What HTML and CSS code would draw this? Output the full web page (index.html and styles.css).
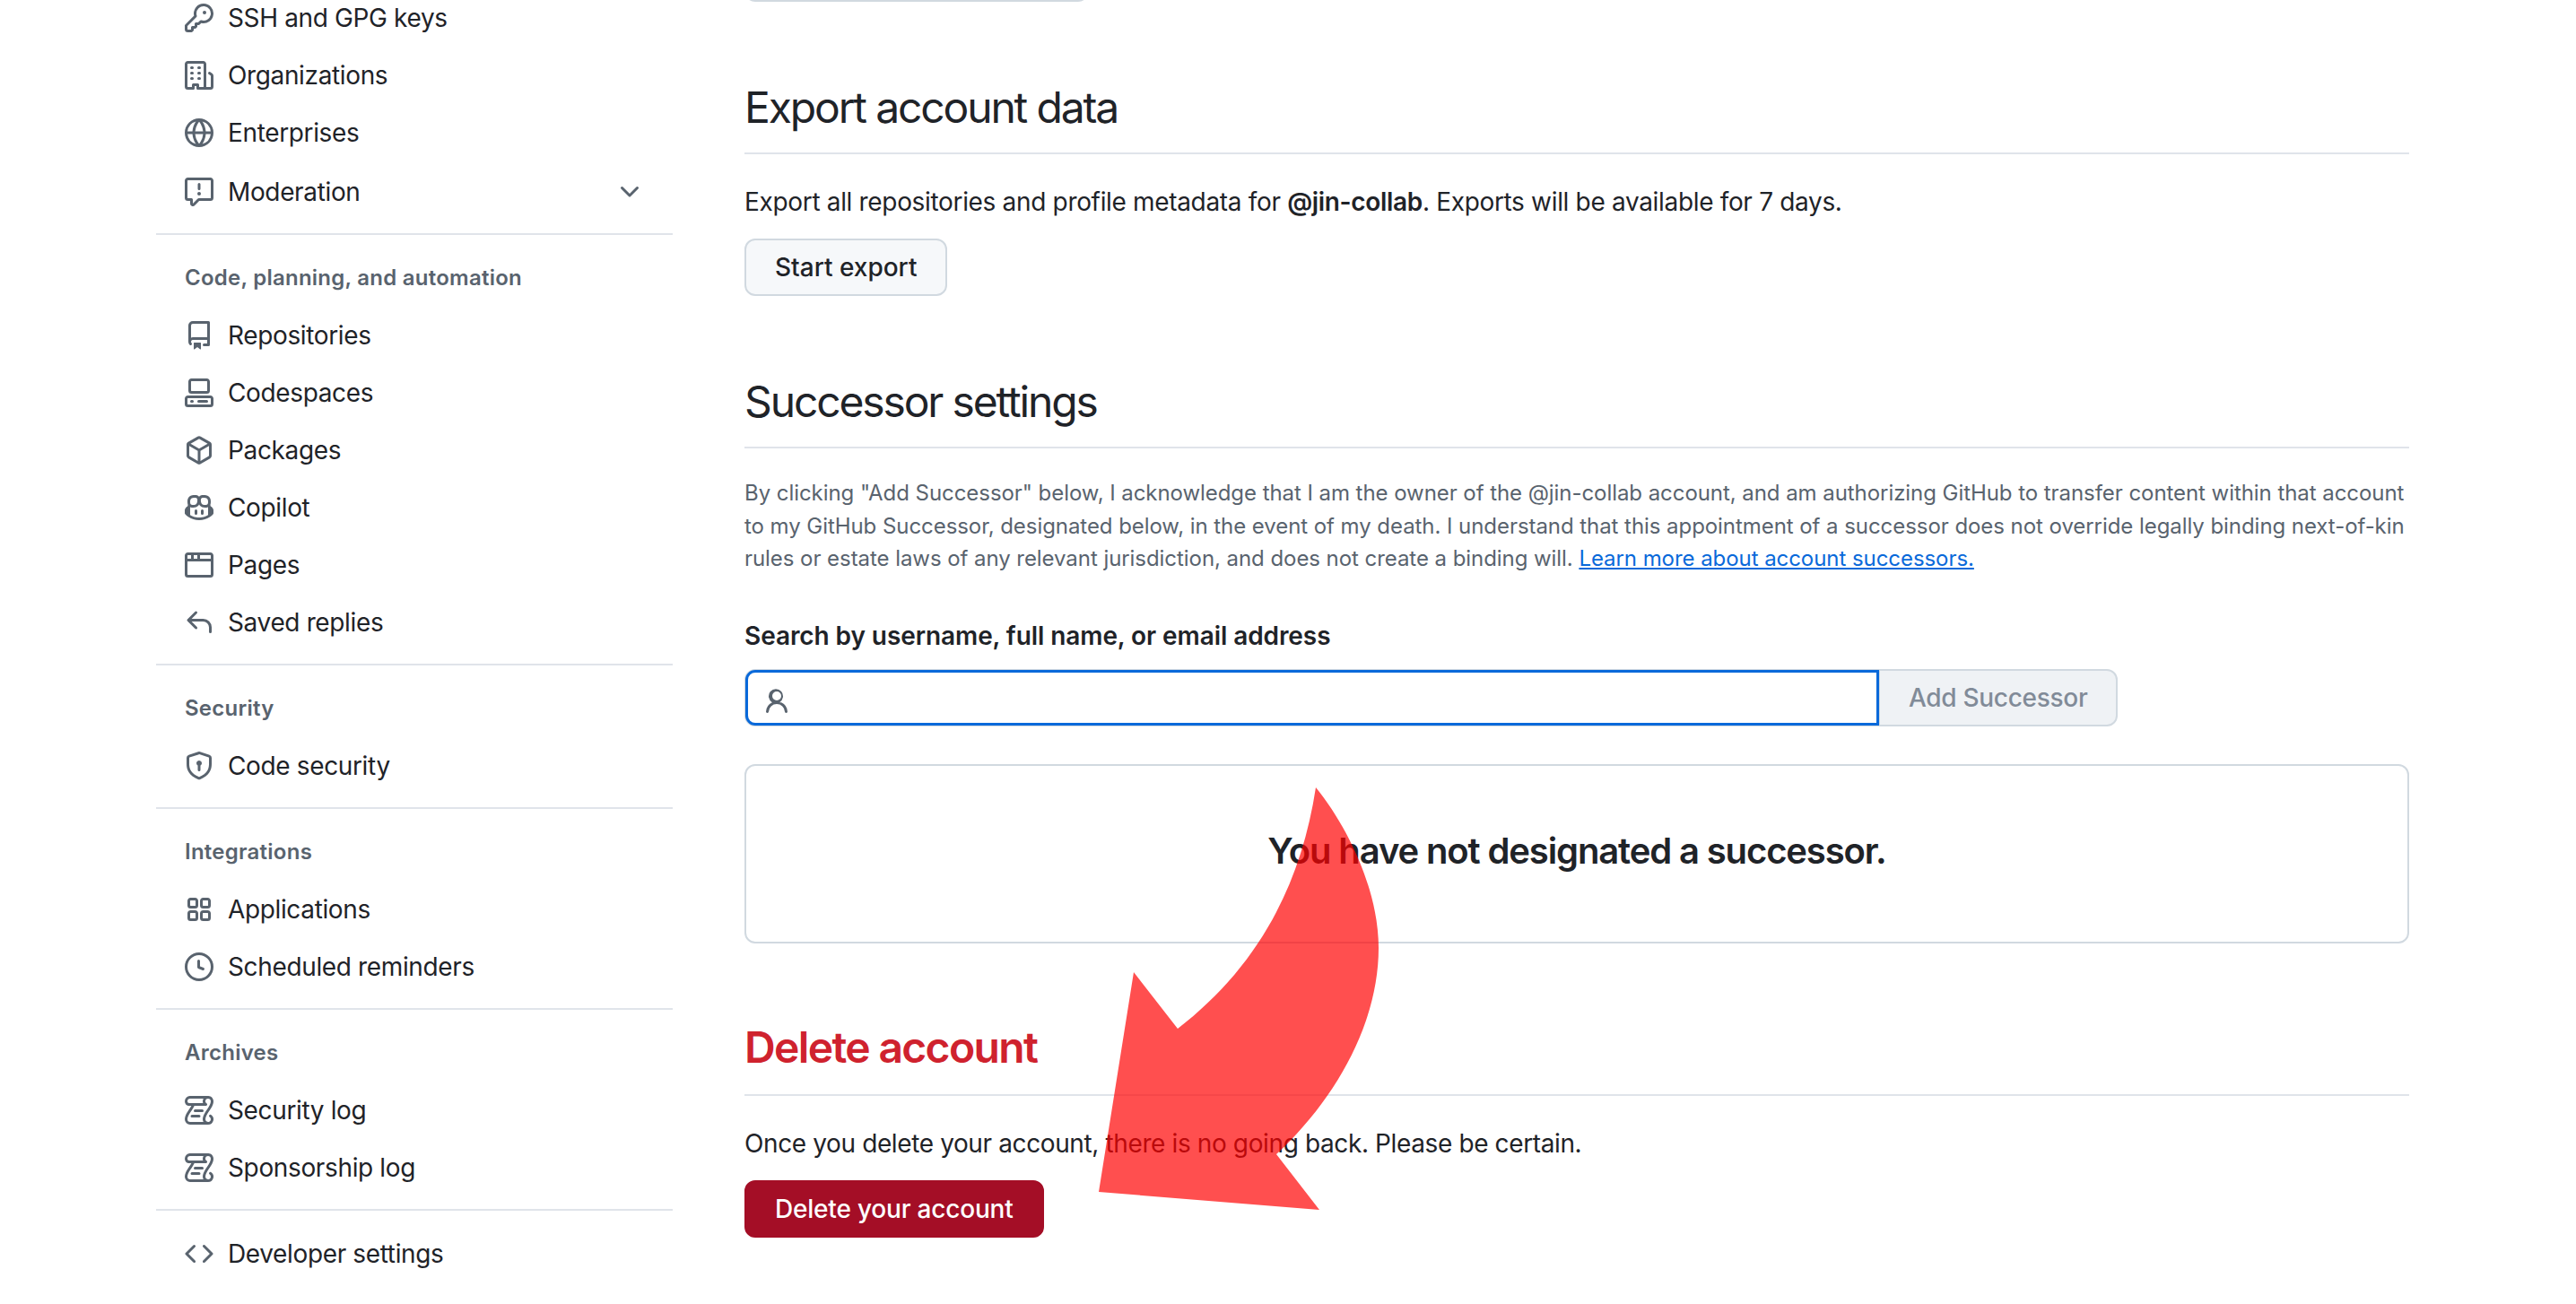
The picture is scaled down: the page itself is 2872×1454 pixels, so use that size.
FILE: index.html
```html
<!DOCTYPE html>
<html lang="en">
<head>
    <meta charset="UTF-8">
    <meta name="viewport" content="width=device-width, initial-scale=1.0">
    <title>Account settings</title>
    <link rel="stylesheet" href="styles.css">
</head>
<body>
    <div class="page">
        <nav class="sidebar">
            <div class="nav-group">
                <a class="nav-item"><svg class="icon" viewBox="0 0 16 16"><path d="M10.5 0a5.499 5.499 0 1 1-1.288 10.848l-.932.932a.749.749 0 0 1-.53.22H7v.75a.749.749 0 0 1-.22.53l-.5.5a.749.749 0 0 1-.53.22H5v.75a.749.749 0 0 1-.22.53l-.5.5a.749.749 0 0 1-.53.22h-2A1.75 1.75 0 0 1 0 14.25v-2c0-.199.079-.389.22-.53l4.932-4.932A5.5 5.5 0 0 1 10.5 0Zm-4 5.5c-.001.431.069.86.205 1.269a.75.75 0 0 1-.181.768L1.5 12.56v1.69c0 .138.112.25.25.25h1.69l.06-.06v-1.19a.75.75 0 0 1 .75-.75h1.19l.06-.06v-1.19a.75.75 0 0 1 .75-.75h1.19l1.023-1.025a.75.75 0 0 1 .768-.18A4 4 0 1 0 6.5 5.5ZM11 6a1 1 0 1 1 0-2 1 1 0 0 1 0 2Z"/></svg>SSH and GPG keys</a>
                <a class="nav-item"><svg class="icon" viewBox="0 0 16 16"><path d="M1.75 16A1.75 1.75 0 0 1 0 14.25V1.75C0 .784.784 0 1.75 0h8.5C11.216 0 12 .784 12 1.75v12.5c0 .085-.006.168-.018.25h2.268a.25.25 0 0 0 .25-.25V8.285a.25.25 0 0 0-.111-.208l-1.055-.703a.749.749 0 1 1 .832-1.248l1.055.703c.487.325.779.871.779 1.456v5.965A1.75 1.75 0 0 1 14.25 16h-3.5a.766.766 0 0 1-.197-.026c-.099.017-.2.026-.303.026h-3a.75.75 0 0 1-.75-.75V14h-1v1.25a.75.75 0 0 1-.75.75Zm-.25-1.75c0 .138.112.25.25.25H4v-1.25a.75.75 0 0 1 .75-.75h2.5a.75.75 0 0 1 .75.75v1.25h2.25a.25.25 0 0 0 .25-.25V1.75a.25.25 0 0 0-.25-.25h-8.5a.25.25 0 0 0-.25.25ZM3.75 6h.5a.75.75 0 0 1 0 1.5h-.5a.75.75 0 0 1 0-1.5ZM3 3.75A.75.75 0 0 1 3.75 3h.5a.75.75 0 0 1 0 1.5h-.5A.75.75 0 0 1 3 3.75Zm4 3A.75.75 0 0 1 7.75 6h.5a.75.75 0 0 1 0 1.5h-.5A.75.75 0 0 1 7 6.75ZM7.75 3h.5a.75.75 0 0 1 0 1.5h-.5a.75.75 0 0 1 0-1.5ZM3 9.75A.75.75 0 0 1 3.75 9h.5a.75.75 0 0 1 0 1.5h-.5A.75.75 0 0 1 3 9.75ZM7.75 9h.5a.75.75 0 0 1 0 1.5h-.5a.75.75 0 0 1 0-1.5Z"/></svg>Organizations</a>
                <a class="nav-item"><svg class="icon" viewBox="0 0 16 16"><path d="M8 0a8 8 0 1 1 0 16A8 8 0 0 1 8 0ZM5.78 8.75a9.64 9.64 0 0 0 1.363 4.177c.255.426.542.832.857 1.215.245-.296.551-.705.857-1.215A9.64 9.64 0 0 0 10.22 8.75Zm4.44-1.5a9.64 9.64 0 0 0-1.363-4.177c-.307-.51-.612-.919-.857-1.215a9.927 9.927 0 0 0-.857 1.215A9.64 9.64 0 0 0 5.78 7.25Zm-5.944 1.5H1.543a6.507 6.507 0 0 0 4.666 5.5c-.123-.181-.24-.365-.352-.552-.715-1.192-1.437-2.874-1.581-4.948Zm-2.733-1.5h2.733c.144-2.074.866-3.756 1.58-4.948.12-.197.237-.381.353-.552a6.507 6.507 0 0 0-4.666 5.5Zm10.181 1.5c-.144 2.074-.866 3.756-1.58 4.948-.12.197-.237.381-.353.552a6.507 6.507 0 0 0 4.666-5.5Zm2.733-1.5a6.507 6.507 0 0 0-4.666-5.5c.123.181.24.365.353.552.714 1.192 1.436 2.874 1.58 4.948Z"/></svg>Enterprises</a>
                <a class="nav-item nav-item-collapsible"><svg class="icon" viewBox="0 0 16 16"><path d="M0 1.75C0 .784.784 0 1.75 0h12.5C15.216 0 16 .784 16 1.75v9.5A1.75 1.75 0 0 1 14.25 13H8.06l-2.573 2.573A1.458 1.458 0 0 1 3 14.543V13H1.75A1.75 1.75 0 0 1 0 11.25Zm1.75-.25a.25.25 0 0 0-.25.25v9.5c0 .138.112.25.25.25h2a.75.75 0 0 1 .75.75v2.19l2.72-2.72a.749.749 0 0 1 .53-.22h6.5a.25.25 0 0 0 .25-.25v-9.5a.25.25 0 0 0-.25-.25Zm7 2.25v2.5a.75.75 0 0 1-1.5 0v-2.5a.75.75 0 0 1 1.5 0ZM9 9a1 1 0 1 1-2 0 1 1 0 0 1 2 0Z"/></svg><span class="nav-label">Moderation</span><svg class="icon" viewBox="0 0 16 16"><path d="M12.78 5.22a.749.749 0 0 1 0 1.06l-4.25 4.25a.749.749 0 0 1-1.06 0L3.22 6.28a.749.749 0 1 1 1.06-1.06L8 8.939l3.72-3.719a.749.749 0 0 1 1.06 0Z"/></svg></a>
            </div>

            <div class="nav-group">
                <div class="nav-heading">Code, planning, and automation</div>
                <a class="nav-item"><svg class="icon" viewBox="0 0 16 16"><path d="M2 2.5A2.5 2.5 0 0 1 4.5 0h8.75a.75.75 0 0 1 .75.75v12.5a.75.75 0 0 1-.75.75h-2.5a.75.75 0 0 1 0-1.5h1.75v-2h-8a1 1 0 0 0-.714 1.7.75.75 0 1 1-1.072 1.05A2.495 2.495 0 0 1 2 11.5Zm10.5-1h-8a1 1 0 0 0-1 1v6.708A2.486 2.486 0 0 1 4.5 9h8ZM5 12.25a.25.25 0 0 1 .25-.25h3.5a.25.25 0 0 1 .25.25v3.25a.25.25 0 0 1-.4.2l-1.45-1.087a.249.249 0 0 0-.3 0L5.4 15.7a.25.25 0 0 1-.4-.2Z"/></svg>Repositories</a>
                <a class="nav-item"><svg class="icon" viewBox="0 0 16 16"><path d="M0 11.25c0-.966.784-1.75 1.75-1.75h12.5c.966 0 1.75.784 1.75 1.75v3A1.75 1.75 0 0 1 14.25 16H1.75A1.75 1.75 0 0 1 0 14.25Zm2-9.5C2 .784 2.784 0 3.75 0h8.5C13.216 0 14 .784 14 1.75v5a1.75 1.75 0 0 1-1.75 1.75h-8.5A1.75 1.75 0 0 1 2 6.75Zm1.75-.25a.25.25 0 0 0-.25.25v5c0 .138.112.25.25.25h8.5a.25.25 0 0 0 .25-.25v-5a.25.25 0 0 0-.25-.25Zm-2 9.5a.25.25 0 0 0-.25.25v3c0 .138.112.25.25.25h12.5a.25.25 0 0 0 .25-.25v-3a.25.25 0 0 0-.25-.25Z"/><path d="M7 12.75a.75.75 0 0 1 .75-.75h4.5a.75.75 0 0 1 0 1.5h-4.5a.75.75 0 0 1-.75-.75Zm-4 0a.75.75 0 0 1 .75-.75h.5a.75.75 0 0 1 0 1.5h-.5a.75.75 0 0 1-.75-.75Z"/></svg>Codespaces</a>
                <a class="nav-item"><svg class="icon" viewBox="0 0 16 16"><path d="m8.878.392 5.25 3.045c.54.314.872.89.872 1.514v6.098a1.75 1.75 0 0 1-.872 1.514l-5.25 3.045a1.75 1.75 0 0 1-1.756 0l-5.25-3.045A1.75 1.75 0 0 1 1 11.049V4.951c0-.624.332-1.201.872-1.514L7.122.392a1.75 1.75 0 0 1 1.756 0ZM7.875 1.69l-4.63 2.685L8 7.133l4.755-2.758-4.63-2.685a.248.248 0 0 0-.25 0ZM2.5 5.677v5.372c0 .09.047.171.125.216l4.625 2.683V8.432Zm6.25 8.271 4.625-2.683a.25.25 0 0 0 .125-.216V5.677L8.75 8.432Z"/></svg>Packages</a>
                <a class="nav-item"><svg class="icon" viewBox="0 0 16 16"><path d="M7.998 15.035c-4.562 0-7.873-2.914-7.998-3.749V9.338c.085-.628.677-1.686 1.588-2.065.013-.07.024-.143.036-.218.029-.183.06-.384.126-.612-.201-.508-.254-1.084-.254-1.656 0-.87.128-1.769.693-2.484.579-.733 1.494-1.124 2.724-1.261 1.206-.134 2.262.034 2.944.765.05.053.096.108.139.165.044-.057.094-.112.143-.165.682-.731 1.738-.899 2.944-.765 1.23.137 2.145.528 2.724 1.261.566.715.693 1.614.693 2.484 0 .572-.053 1.148-.254 1.656.066.228.098.429.126.612.012.076.024.148.037.218.924.385 1.522 1.471 1.591 2.095v1.872c0 .766-3.351 3.795-8.002 3.795Zm0-1.485c2.28 0 4.584-1.11 5.002-1.433V7.862l-.023-.116c-.49.21-1.075.291-1.727.291-1.146 0-2.059-.327-2.71-.991A3.222 3.222 0 0 1 8 6.303a3.24 3.24 0 0 1-.544.743c-.65.664-1.563.991-2.71.991-.652 0-1.236-.081-1.727-.291l-.023.116v4.255c.419.323 2.722 1.433 5.002 1.433ZM6.762 2.83c-.193-.206-.637-.413-1.682-.297-1.019.113-1.479.404-1.713.7-.247.312-.369.789-.369 1.554 0 .793.129 1.171.308 1.371.162.181.519.379 1.442.379.853 0 1.339-.235 1.638-.54.315-.322.527-.827.617-1.553.117-.935-.037-1.395-.241-1.614Zm4.155-.297c-1.044-.116-1.488.091-1.681.297-.204.219-.359.679-.242 1.614.091.726.303 1.231.618 1.553.299.305.784.54 1.638.54.922 0 1.28-.198 1.442-.379.179-.2.308-.578.308-1.371 0-.765-.123-1.242-.37-1.554-.233-.296-.693-.587-1.713-.7Z"/><path d="M6.25 9.037a.75.75 0 0 1 .75.75v1.501a.75.75 0 0 1-1.5 0V9.787a.75.75 0 0 1 .75-.75Zm4.25.75v1.501a.75.75 0 0 1-1.5 0V9.787a.75.75 0 0 1 1.5 0Z"/></svg>Copilot</a>
                <a class="nav-item"><svg class="icon" viewBox="0 0 16 16"><path d="M0 2.75C0 1.784.784 1 1.75 1h12.5c.966 0 1.75.784 1.75 1.75v10.5A1.75 1.75 0 0 1 14.25 15H1.75A1.75 1.75 0 0 1 0 13.25ZM14.5 6h-13v7.25c0 .138.112.25.25.25h12.5a.25.25 0 0 0 .25-.25Zm-6-3.5v2h6V2.75a.25.25 0 0 0-.25-.25ZM5 2.5v2h2v-2Zm-3.25 0a.25.25 0 0 0-.25.25V4.5h2v-2Z"/></svg>Pages</a>
                <a class="nav-item"><svg class="icon" viewBox="0 0 16 16"><path d="M6.78 1.97a.75.75 0 0 1 0 1.06L3.81 6h6.44A4.75 4.75 0 0 1 15 10.75v2.5a.75.75 0 0 1-1.5 0v-2.5a3.25 3.25 0 0 0-3.25-3.25H3.81l2.97 2.97a.749.749 0 0 1-.326 1.275.749.749 0 0 1-.734-.215L1.47 7.28a.75.75 0 0 1 0-1.06l4.25-4.25a.75.75 0 0 1 1.06 0Z"/></svg>Saved replies</a>
            </div>

            <div class="nav-group">
                <div class="nav-heading">Security</div>
                <a class="nav-item"><svg class="icon" viewBox="0 0 16 16"><path d="m8.533.133 5.25 1.68A1.75 1.75 0 0 1 15 3.48V7c0 1.566-.32 3.182-1.303 4.682-.983 1.498-2.585 2.813-5.032 3.855a1.697 1.697 0 0 1-1.33 0c-2.447-1.042-4.049-2.357-5.032-3.855C1.32 10.182 1 8.566 1 7V3.48a1.75 1.75 0 0 1 1.217-1.667l5.25-1.68a1.748 1.748 0 0 1 1.066 0Zm-.61 1.429.001.001-5.25 1.68a.251.251 0 0 0-.174.237V7c0 1.36.275 2.666 1.057 3.859.784 1.194 2.121 2.342 4.366 3.298a.196.196 0 0 0 .154 0c2.245-.957 3.582-2.103 4.366-3.297C13.225 9.666 13.5 8.358 13.5 7V3.48a.25.25 0 0 0-.174-.238l-5.25-1.68a.25.25 0 0 0-.153 0ZM9.5 6.5c0 .536-.286 1.032-.75 1.3v2.45a.75.75 0 0 1-1.5 0V7.8A1.5 1.5 0 1 1 9.5 6.5Z"/></svg>Code security</a>
            </div>

            <div class="nav-group">
                <div class="nav-heading">Integrations</div>
                <a class="nav-item"><svg class="icon" viewBox="0 0 16 16"><path d="M1.5 3.25c0-.966.784-1.75 1.75-1.75h2.5c.966 0 1.75.784 1.75 1.75v2.5A1.75 1.75 0 0 1 5.75 7.5h-2.5A1.75 1.75 0 0 1 1.5 5.75Zm7 0c0-.966.784-1.75 1.75-1.75h2.5c.966 0 1.75.784 1.75 1.75v2.5a1.75 1.75 0 0 1-1.75 1.75h-2.5A1.75 1.75 0 0 1 8.5 5.75Zm-7 7c0-.966.784-1.75 1.75-1.75h2.5c.966 0 1.75.784 1.75 1.75v2.5a1.75 1.75 0 0 1-1.75 1.75h-2.5a1.75 1.75 0 0 1-1.75-1.75Zm7 0c0-.966.784-1.75 1.75-1.75h2.5c.966 0 1.75.784 1.75 1.75v2.5a1.75 1.75 0 0 1-1.75 1.75h-2.5a1.75 1.75 0 0 1-1.75-1.75ZM3.25 3a.25.25 0 0 0-.25.25v2.5c0 .138.112.25.25.25h2.5A.25.25 0 0 0 6 5.75v-2.5A.25.25 0 0 0 5.75 3Zm7 0a.25.25 0 0 0-.25.25v2.5c0 .138.112.25.25.25h2.5a.25.25 0 0 0 .25-.25v-2.5a.25.25 0 0 0-.25-.25Zm-7 7a.25.25 0 0 0-.25.25v2.5c0 .138.112.25.25.25h2.5a.25.25 0 0 0 .25-.25v-2.5a.25.25 0 0 0-.25-.25Zm7 0a.25.25 0 0 0-.25.25v2.5c0 .138.112.25.25.25h2.5a.25.25 0 0 0 .25-.25v-2.5a.25.25 0 0 0-.25-.25Z"/></svg>Applications</a>
                <a class="nav-item"><svg class="icon" viewBox="0 0 16 16"><path d="M8 0a8 8 0 1 1 0 16A8 8 0 0 1 8 0ZM1.5 8a6.5 6.5 0 1 0 13 0 6.5 6.5 0 0 0-13 0Zm7-3.25v2.992l2.028.812a.75.75 0 0 1-.557 1.392l-2.5-1A.751.751 0 0 1 7 8.25v-3.5a.75.75 0 0 1 1.5 0Z"/></svg>Scheduled reminders</a>
            </div>

            <div class="nav-group">
                <div class="nav-heading">Archives</div>
                <a class="nav-item"><svg class="icon" viewBox="0 0 16 16"><path d="M5 8.25a.75.75 0 0 1 .75-.75h4a.75.75 0 0 1 0 1.5h-4A.75.75 0 0 1 5 8.25ZM4 10.5A.75.75 0 0 0 4 12h4a.75.75 0 0 0 0-1.5H4Z"/><path d="M13-.005c1.654 0 3 1.328 3 3 0 .982-.338 1.933-.783 2.818-.443.879-1.028 1.758-1.582 2.588l-.011.017c-.568.853-1.104 1.659-1.501 2.446-.398.789-.623 1.494-.623 2.136a1.5 1.5 0 1 0 2.333-1.248.75.75 0 0 1 .834-1.246A3 3 0 0 1 13 16H3a3 3 0 0 1-3-3c0-1.582.891-3.135 1.777-4.506.209-.322.418-.637.623-.946.473-.709.923-1.386 1.287-2.048H2.51c-.576 0-1.381-.133-1.907-.783A2.68 2.68 0 0 1 0 2.995a3 3 0 0 1 3-3Zm0 1.5a1.5 1.5 0 0 0-1.5 1.5c0 .476.223.834.667 1.132A.75.75 0 0 1 11.75 5.5H5.368c-.467 1.003-1.141 2.015-1.773 2.963-.192.289-.381.571-.558.845C2.13 10.711 1.5 11.916 1.5 13A1.5 1.5 0 0 0 3 14.5h7.401A2.989 2.989 0 0 1 10 13c0-.979.338-1.928.784-2.812.441-.874 1.023-1.748 1.575-2.576l.017-.026c.568-.853 1.103-1.658 1.501-2.448.398-.79.623-1.497.623-2.143 0-.838-.669-1.5-1.5-1.5Zm-10 0a1.5 1.5 0 0 0-1.5 1.5c0 .321.1.569.27.778.097.12.325.227.74.227h7.674A2.737 2.737 0 0 1 10 2.995c0-.546.146-1.059.401-1.5Z"/></svg>Security log</a>
                <a class="nav-item"><svg class="icon" viewBox="0 0 16 16"><path d="M5 8.25a.75.75 0 0 1 .75-.75h4a.75.75 0 0 1 0 1.5h-4A.75.75 0 0 1 5 8.25ZM4 10.5A.75.75 0 0 0 4 12h4a.75.75 0 0 0 0-1.5H4Z"/><path d="M13-.005c1.654 0 3 1.328 3 3 0 .982-.338 1.933-.783 2.818-.443.879-1.028 1.758-1.582 2.588l-.011.017c-.568.853-1.104 1.659-1.501 2.446-.398.789-.623 1.494-.623 2.136a1.5 1.5 0 1 0 2.333-1.248.75.75 0 0 1 .834-1.246A3 3 0 0 1 13 16H3a3 3 0 0 1-3-3c0-1.582.891-3.135 1.777-4.506.209-.322.418-.637.623-.946.473-.709.923-1.386 1.287-2.048H2.51c-.576 0-1.381-.133-1.907-.783A2.68 2.68 0 0 1 0 2.995a3 3 0 0 1 3-3Zm0 1.5a1.5 1.5 0 0 0-1.5 1.5c0 .476.223.834.667 1.132A.75.75 0 0 1 11.75 5.5H5.368c-.467 1.003-1.141 2.015-1.773 2.963-.192.289-.381.571-.558.845C2.13 10.711 1.5 11.916 1.5 13A1.5 1.5 0 0 0 3 14.5h7.401A2.989 2.989 0 0 1 10 13c0-.979.338-1.928.784-2.812.441-.874 1.023-1.748 1.575-2.576l.017-.026c.568-.853 1.103-1.658 1.501-2.448.398-.79.623-1.497.623-2.143 0-.838-.669-1.5-1.5-1.5Zm-10 0a1.5 1.5 0 0 0-1.5 1.5c0 .321.1.569.27.778.097.12.325.227.74.227h7.674A2.737 2.737 0 0 1 10 2.995c0-.546.146-1.059.401-1.5Z"/></svg>Sponsorship log</a>
            </div>

            <div class="nav-group">
                <a class="nav-item"><svg class="icon" viewBox="0 0 16 16"><path d="m11.28 3.22 4.25 4.25a.75.75 0 0 1 0 1.06l-4.25 4.25a.749.749 0 0 1-1.275-.326.749.749 0 0 1 .215-.734L13.94 8l-3.72-3.72a.749.749 0 0 1 .326-1.275.749.749 0 0 1 .734.215Zm-6.56 0a.751.751 0 0 1 1.042.018.751.751 0 0 1 .018 1.042L2.06 8l3.72 3.72a.749.749 0 0 1-.326 1.275.749.749 0 0 1-.734-.215L.47 8.53a.75.75 0 0 1 0-1.06Z"/></svg>Developer settings</a>
            </div>
        </nav>

        <main class="content">
            <div class="cut-off-button"></div>

            <section class="section">
                <h2 class="section-title">Export account data</h2>
                <p class="section-text">Export all repositories and profile metadata for <strong>@jin-collab</strong>. Exports will be available for 7 days.</p>
                <button class="btn">Start export</button>
            </section>

            <section class="section">
                <h2 class="section-title">Successor settings</h2>
                <p class="note">By clicking "Add Successor" below, I acknowledge that I am the owner of the @jin-collab account, and am authorizing GitHub to transfer content within that account to my GitHub Successor, designated below, in the event of my death. I understand that this appointment of a successor does not override legally binding next-of-kin rules or estate laws of any relevant jurisdiction, and does not create a binding will. <a class="note-link">Learn more about account successors.</a></p>
                <label class="search-label" for="successor">Search by username, full name, or email address</label>
                <div class="search-row">
                    <div class="search-field">
                        <svg class="icon search-icon" viewBox="0 0 16 16"><path d="M10.561 8.073a6.005 6.005 0 0 1 3.432 5.142.75.75 0 1 1-1.498.07 4.5 4.5 0 0 0-8.99 0 .75.75 0 0 1-1.498-.07 6.004 6.004 0 0 1 3.431-5.142 3.999 3.999 0 1 1 4.123 0ZM10.5 4.5a2.5 2.5 0 1 0-5 0 2.5 2.5 0 0 0 5 0Z"/></svg>
                        <input class="search-input" type="text" id="successor">
                    </div>
                    <button class="btn btn-add" disabled>Add Successor</button>
                </div>
                <div class="blankslate">You have not designated a successor.</div>
            </section>

            <section class="section section-delete">
                <h2 class="section-title danger">Delete account</h2>
                <p class="section-text">Once you delete your account, there is no going back. Please be certain.</p>
                <button class="btn btn-danger">Delete your account</button>
            </section>
        </main>
    </div>

    <!-- red annotation arrow drawn over the page -->
    <svg class="arrow" viewBox="0 0 2872 1454">
        <path d="M1467 878 C1505 925 1537 995 1537 1057 C1537 1140 1490 1225 1423 1287 L1471 1349 L1225 1329 L1264 1084 L1313 1147 C1400 1080 1450 990 1467 878 Z"/>
    </svg>
</body>
</html>
```

FILE: styles.css
```css
body {
    font-family: Inter, "Liberation Sans", sans-serif;
    color: #1f2328;
    background-color: #fff;
    margin: 0;
    height: 1454px;
    overflow: hidden;
}

.page {
    display: flex;
    gap: 80px;
    margin-top: -12px;
    padding-left: 174px;
}

.icon {
    width: 32px;
    height: 32px;
    fill: #59636e;
    flex-shrink: 0;
}

/* sidebar */
.sidebar {
    width: 576px;
    flex-shrink: 0;
}

.nav-group {
    padding-bottom: 14px;
    margin-bottom: 16px;
    border-bottom: 2px solid #e0e4ea;
}

.nav-group:last-child {
    border-bottom: none;
}

.nav-item {
    display: flex;
    align-items: center;
    gap: 16px;
    height: 64px;
    padding: 0 32px;
    font-size: 28px;
    letter-spacing: -0.36px;
}

.nav-item-collapsible {
    margin-top: 2px;
}

.nav-label {
    flex: 1;
}

.nav-heading {
    display: flex;
    align-items: center;
    box-sizing: border-box;
    height: 64px;
    padding: 0 32px 2px;
    font-size: 24px;
    font-weight: 600;
    letter-spacing: 0.25px;
    color: #59636e;
}

/* main column */
.content {
    width: 1856px;
    flex-shrink: 0;
}

.cut-off-button {
    width: 384px;
    height: 64px;
    margin-top: -50px;
    box-sizing: border-box;
    border: 2px solid #d1d9e0;
    border-radius: 12px;
    background: #f6f8fa;
}

.section {
    margin-top: 88px;
}

.section-delete {
    margin-top: 86px;
}

.section-delete .section-text {
    letter-spacing: -0.38px;
}

.section-title {
    margin: 0;
    padding-bottom: 20px;
    border-bottom: 2px solid #e0e4ea;
    font-size: 48px;
    font-weight: 400;
    line-height: 60px;
    letter-spacing: -2.15px;
}

.section-title.danger {
    padding-bottom: 22px;
    color: #cf222e;
    font-weight: 600;
    letter-spacing: -1.65px;
}

.section-text {
    margin: 32px 0 20px;
    font-size: 28px;
    line-height: 42px;
    letter-spacing: -0.33px;
}

.section-text strong {
    font-weight: 600;
}

.btn {
    display: block;
    box-sizing: border-box;
    height: 64px;
    padding: 0 32px;
    border: 2px solid #d1d9e0;
    border-radius: 12px;
    background: #f6f8fa;
    color: #1f2328;
    font-family: inherit;
    font-size: 28px;
    font-weight: 500;
}

.btn-danger {
    background: #a40e26;
    border-color: #a40e26;
    color: #fff;
    letter-spacing: -0.2px;
}

.btn-add {
    margin-left: -2px;
    border-radius: 0 12px 12px 0;
    background: #eff2f5;
    color: #818b98;
    letter-spacing: -0.3px;
}

.note {
    margin: 32px 0 46px;
    font-size: 24px;
    line-height: 36.5px;
    letter-spacing: -0.06px;
    color: #59636e;
}

.note-link {
    color: #0969da;
    text-decoration: underline;
}

.search-label {
    display: block;
    margin-bottom: 16px;
    font-size: 28px;
    font-weight: 600;
    line-height: 42px;
    letter-spacing: -0.08px;
}

.search-row {
    display: flex;
}

.search-field {
    position: relative;
    width: 1266px;
}

.search-icon {
    position: absolute;
    left: 20px;
    top: 21px;
}

.search-input {
    display: block;
    box-sizing: border-box;
    width: 100%;
    height: 64px;
    border: 2px solid #d1d9e0;
    border-radius: 12px 0 0 12px;
    outline: 3px solid #0969da;
    outline-offset: -4px;
    background: #fff;
}

.blankslate {
    display: flex;
    align-items: center;
    justify-content: center;
    box-sizing: border-box;
    height: 200px;
    margin-top: 42px;
    padding-bottom: 6px;
    border: 2px solid #d1d9e0;
    border-radius: 12px;
    font-size: 40px;
    font-weight: 600;
    letter-spacing: -1.13px;
}

.arrow {
    position: absolute;
    left: 0;
    top: 0;
    width: 2872px;
    height: 1454px;
    fill: rgba(255, 0, 0, 0.69);
}
```
